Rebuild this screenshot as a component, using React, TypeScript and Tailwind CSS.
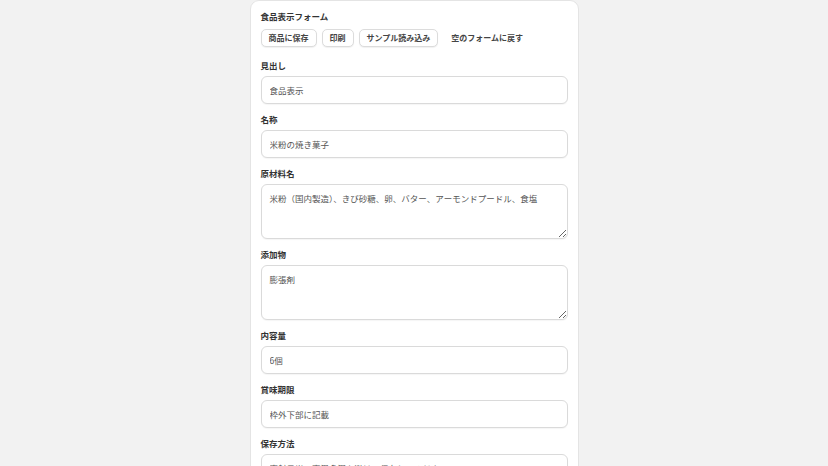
import { useState } from "react";

type Field = {
  id: string;
  label: string;
  value: string;
  multiline?: boolean;
};

const initialFields: Field[] = [
  { id: "heading", label: "見出し", value: "食品表示" },
  { id: "name", label: "名称", value: "米粉の焼き菓子" },
  {
    id: "ingredients",
    label: "原材料名",
    value: "米粉（国内製造）、きび砂糖、卵、バター、アーモンドプードル、食塩",
    multiline: true,
  },
  { id: "additives", label: "添加物", value: "膨張剤", multiline: true },
  { id: "amount", label: "内容量", value: "6個" },
  { id: "expiry", label: "賞味期限", value: "枠外下部に記載" },
  { id: "storage", label: "保存方法", value: "直射日光、高温多湿を避けて保存してください。" },
];

const font = { fontFamily: '"Noto Sans CJK JP", "Noto Sans", sans-serif' };

export default function App() {
  const [fields, setFields] = useState(initialFields);

  const update = (id: string, value: string) =>
    setFields((prev) => prev.map((f) => (f.id === id ? { ...f, value } : f)));

  return (
    <main className="min-h-screen bg-[#f2f2f2] text-[#333]" style={font}>
      <div className="mx-auto w-[329px] rounded-[9px] border border-[#e4e4e4] bg-white px-[10px] pt-[9px] pb-6">
        <h1 className="text-[8.5px] font-bold leading-[12px] text-[#333]">食品表示フォーム</h1>

        {/* toolbar */}
        <div className="mt-[7px] flex items-center gap-[5px]">
          <button className="h-[18px] rounded-[5px] border border-[#dcdcdc] bg-white px-[7px] text-[8px] font-bold leading-none text-[#444] shadow-[0_1px_1px_rgba(0,0,0,0.06)]">
            商品に保存
          </button>
          <button className="h-[18px] rounded-[5px] border border-[#dcdcdc] bg-white px-[7px] text-[8px] font-bold leading-none text-[#444] shadow-[0_1px_1px_rgba(0,0,0,0.06)]">
            印刷
          </button>
          <button className="h-[18px] rounded-[5px] border border-[#dcdcdc] bg-white px-[7px] text-[8px] font-bold leading-none text-[#444] shadow-[0_1px_1px_rgba(0,0,0,0.06)]">
            サンプル読み込み
          </button>
          <button className="h-[18px] px-[8px] text-[8px] font-bold leading-none text-[#444]">
            空のフォームに戻す
          </button>
        </div>

        <div className="mt-[12px] flex flex-col gap-[9px]">
          {fields.map((f) => (
            <label key={f.id} className="flex flex-col gap-[5px]">
              <span className="text-[8.5px] font-bold leading-[12px] text-[#333]">{f.label}</span>
              {f.multiline ? (
                <textarea
                  value={f.value}
                  onChange={(e) => update(f.id, e.target.value)}
                  className="h-[55px] w-full rounded-[6px] border border-[#dadada] bg-white px-[8px] pt-[6px] text-[8.5px] leading-[14px] text-[#555] shadow-[0_1px_1px_rgba(0,0,0,0.04)] outline-none"
                  style={font}
                />
              ) : (
                <input
                  value={f.value}
                  onChange={(e) => update(f.id, e.target.value)}
                  className="h-[28px] w-full rounded-[6px] border border-[#dadada] bg-white px-[8px] text-[8.5px] text-[#555] shadow-[0_1px_1px_rgba(0,0,0,0.04)] outline-none"
                  style={font}
                />
              )}
            </label>
          ))}
        </div>
      </div>
    </main>
  );
}
